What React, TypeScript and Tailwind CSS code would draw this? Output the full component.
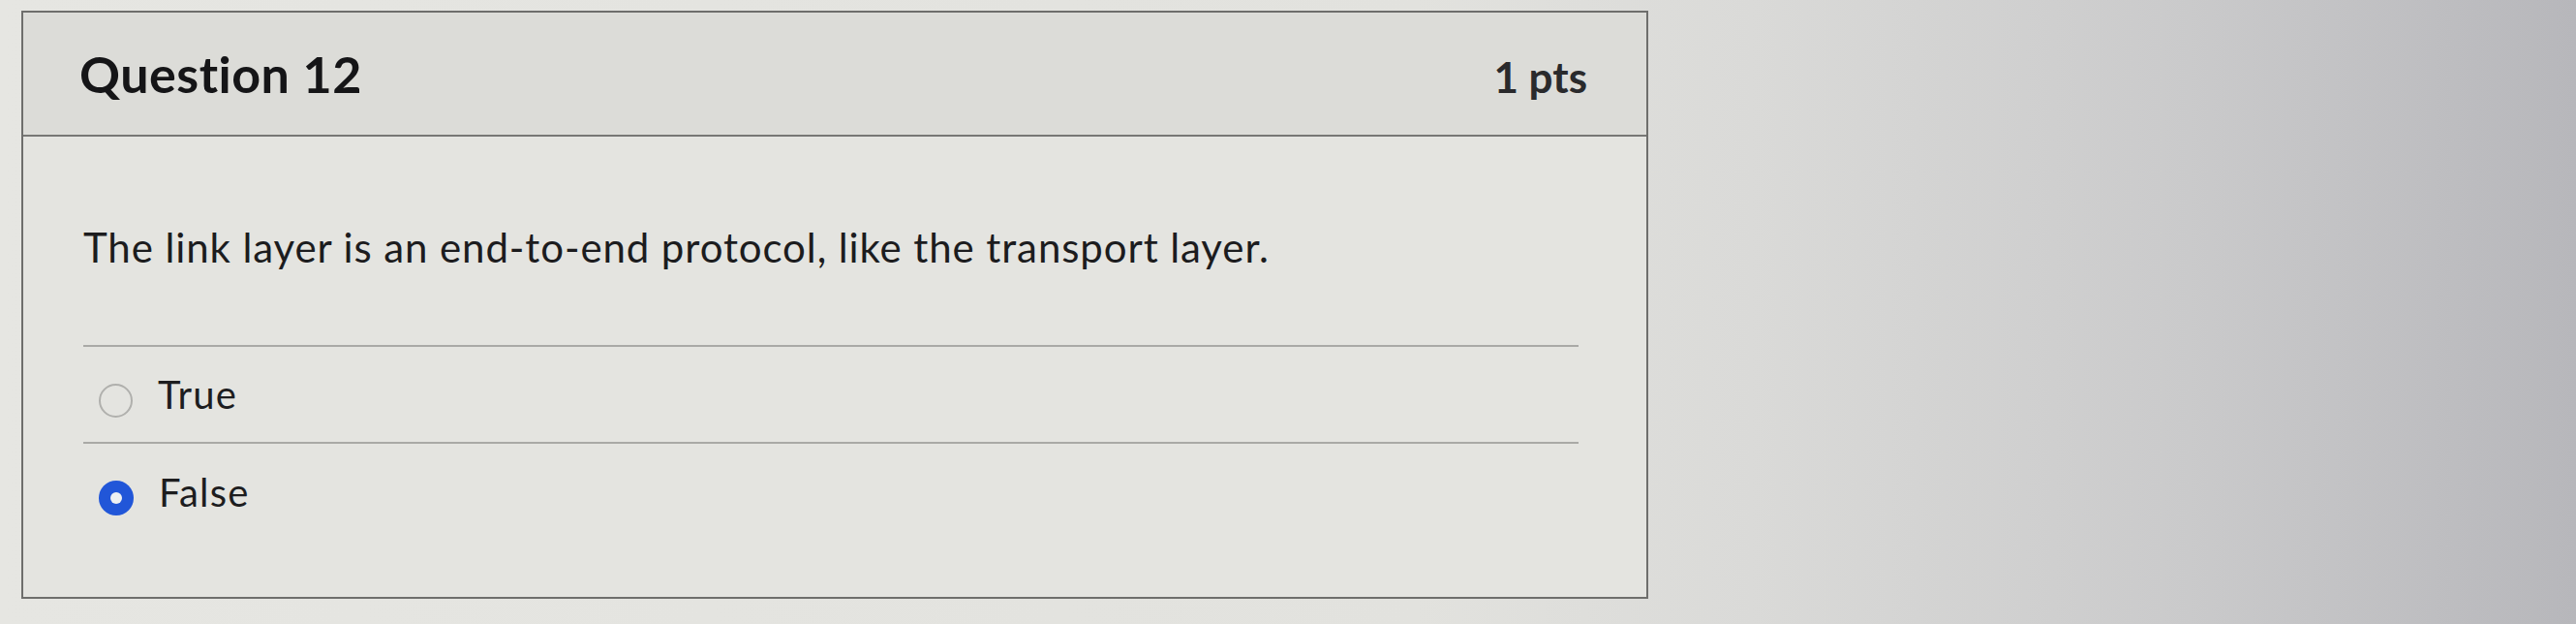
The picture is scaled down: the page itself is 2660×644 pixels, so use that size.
import React, { useState } from 'react';

type Choice = { id: string; label: string };

const choices: Choice[] = [
  { id: 'true', label: 'True' },
  { id: 'false', label: 'False' },
];

function Radio({ checked }: { checked: boolean }) {
  return checked ? (
    <div className="flex h-[36px] w-[36px] shrink-0 items-center justify-center rounded-full bg-[#2156d8]">
      <div className="h-[12px] w-[12px] rounded-full bg-[#eef0f2]"></div>
    </div>
  ) : (
    <div className="h-[35px] w-[35px] shrink-0 rounded-full border-2 border-[#b0b0ad] bg-[#e4e4e0]"></div>
  );
}

export default function App() {
  const [answer, setAnswer] = useState('false');

  return (
    <div
      className="h-[644px] w-[2660px] overflow-hidden bg-[linear-gradient(90deg,#e6e6e2_0%,#e2e2de_55%,#dadad8_68%,#cacacb_85%,#b7b7bb_100%)] pl-[22px] pt-[11px] [font-variant-ligatures:none]"
      style={{ fontFamily: 'Lato, "Open Sans", Arial, sans-serif' }}
    >
      <div className="flex h-[607px] w-[1680px] flex-col border-2 border-[#6e6e6c] bg-[#e4e4e0]">
        <div className="flex h-[128px] shrink-0 items-center justify-between border-b-2 border-[#777775] bg-[#dcdcd8] pl-[58px] pr-[61px]">
          <h2 className="text-[52px] leading-none font-bold tracking-[0.5px] text-[#151517]">Question 12</h2>
          <span className="mt-[6px] text-[44px] leading-none font-bold text-[#2a2a2c]">1 pts</span>
        </div>

        <div className="flex flex-col pl-[62px] pr-[70px]">
          <p className="mt-[88px] text-[42px] leading-[52px] tracking-[0.9px] text-[#1c1c1e]">
            The link layer is an end-to-end protocol, like the transport layer.
          </p>

          <div className="mt-[75px] border-t-2 border-[#a9a9a6]">
            {choices.map((c, i) => (
              <label
                key={c.id}
                onClick={() => setAnswer(c.id)}
                className={`flex h-[100px] cursor-pointer items-center ${i === 0 ? 'border-b-2 border-[#a9a9a6]' : ''}`}
              >
                <div className="ml-[16px] mt-[12px]">
                  <Radio checked={answer === c.id} />
                </div>
                <span className="ml-[26px] text-[40px] leading-none tracking-[1.2px] text-[#1d1d1f]">{c.label}</span>
              </label>
            ))}
          </div>
        </div>
      </div>
    </div>
  );
}
